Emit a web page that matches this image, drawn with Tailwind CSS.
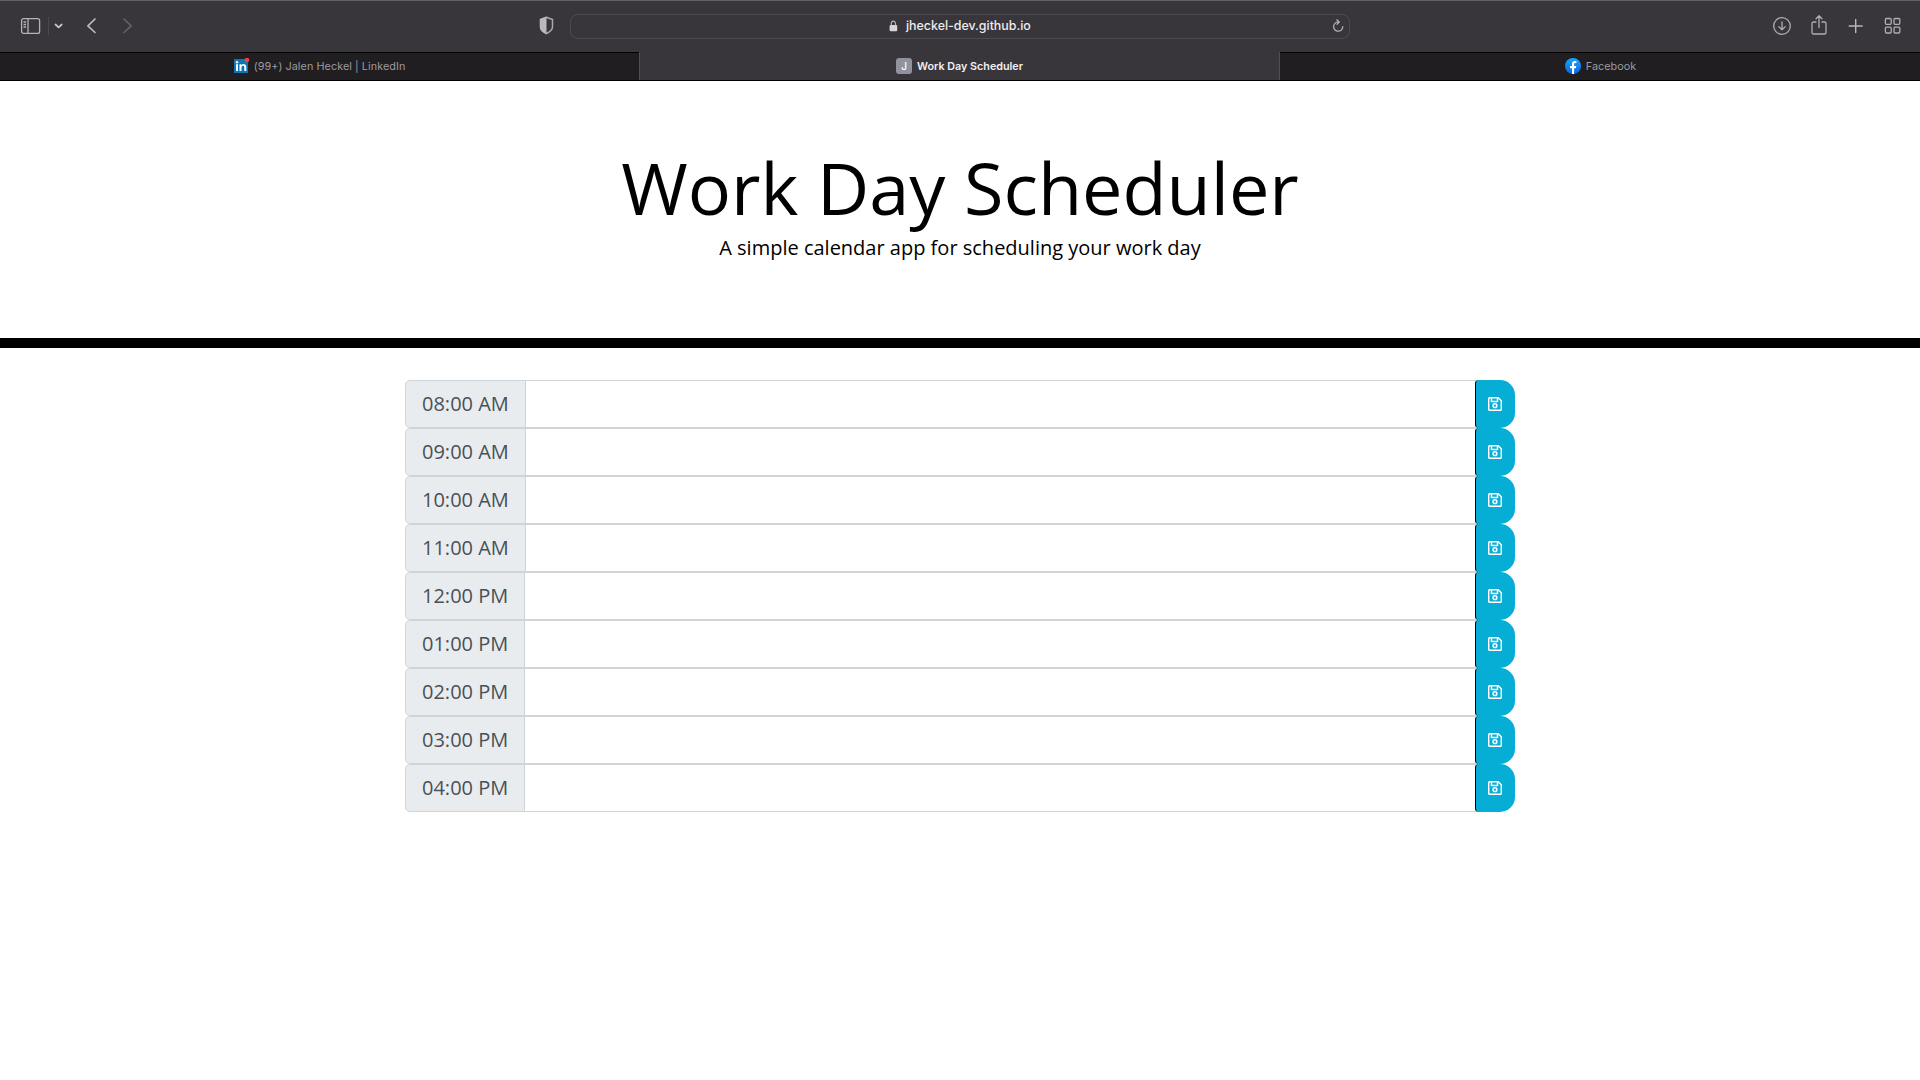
<!DOCTYPE html>
<html lang="en">
<head>
<meta charset="utf-8">
<title>Work Day Scheduler</title>
<script src="https://cdn.jsdelivr.net/npm/@tailwindcss/browser@4"></script>
</head>
<body class="h-screen overflow-hidden bg-white font-['Open_Sans',sans-serif] text-black">
<div class="h-[81px] border-t border-[#626166] bg-[#38363b] font-[Inter,sans-serif]">
  <div class="flex h-[51px] items-center pl-[20px] pr-[18px]">
    <svg class="mb-px h-[18px] w-[22px] shrink-0" viewBox="0 0 22 18" fill="none" stroke="#b5b3b8" stroke-width="1.3"><rect x="1.6" y="1.6" width="18" height="14.8" rx="2"/><path d="M8 1.6v14.8M3.5 5h2.6M3.5 7.5h2.6M3.5 10h2.6"/></svg>
    <div class="mb-px ml-[6px] h-[18px] w-px bg-[#4b494e]"></div>
    <svg class="mb-px ml-[5px] h-[8px] w-[10px]" viewBox="0 0 10 8" fill="none" stroke="#c8c7ca" stroke-width="1.7" stroke-linecap="round" stroke-linejoin="round"><path d="M1.500 2.500 4.600 5.300l3.100-2.800"/></svg>
    <svg class="mb-px ml-[22px] h-[18px] w-[12px]" viewBox="0 0 12 18" fill="none" stroke="#bbb9be" stroke-width="1.700" stroke-linecap="round" stroke-linejoin="round"><path d="M9 2 1.900 8.800 9 15.500"/></svg>
    <svg class="mb-px ml-[24px] h-[18px] w-[12px]" viewBox="0 0 12 18" fill="none" stroke="#636167" stroke-width="1.700" stroke-linecap="round" stroke-linejoin="round"><path d="M2 2l7.200 6.800L2 15.500"/></svg>
    <svg class="mb-px ml-[405px] h-[20px] w-[16px]" viewBox="0 0 16 20"><path d="M8 1.800 14 4v7.500c0 3-3 5-6 6.500-3-1.500-6-3.500-6-6.500V4z" transform="translate(-.5 -.5)" fill="none" stroke="#aaa8ad" stroke-width="1.500"/><path d="M7.500.500.900 3v8c0 3.500 3.100 5.800 6.600 7.400z" fill="#bab8bd"/></svg>
    <div class="ml-[15px] flex h-[25px] w-[780px] items-center rounded-[8px] border border-[#4d4b50] pr-[5px]">
      <svg class="mb-px ml-[318px] h-[12px] w-[9px]" viewBox="0 0 9 12"><rect x=".6" y="5" width="7.600" height="6.300" rx="1" fill="#d6d5d7"/><path d="M2.300 5.500V3.600a2.100 2.400 0 0 1 4.200 0v1.900" fill="none" stroke="#b5b3b8" stroke-width="1.200"/></svg>
      <span class="ml-[8px] w-[127px] whitespace-nowrap text-[12.4px] font-medium leading-none text-[#ededee]">jheckel-dev.github.io</span>
      <svg class="mb-px ml-auto h-[14px] w-[12px]" viewBox="0 0 12 14" fill="none" stroke="#b7b5ba" stroke-width="1.200" stroke-linecap="round" stroke-linejoin="round"><path d="M10.800 7.500A4.600 4.600 0 1 1 6.600 3M4.800.800l2.400 2.200L5 5.300"/></svg>
    </div>
    <svg class="mb-px ml-auto h-[20px] w-[20px]" viewBox="0 0 20 20" fill="none" stroke="#b0aeb3" stroke-width="1.300" stroke-linecap="round" stroke-linejoin="round"><circle cx="10" cy="10" r="8.300"/><path d="M10 5.800v7.700M6.800 10.600l3.200 3.100 3.200-3.100"/></svg>
    <svg class="mb-[3px] ml-[18px] h-[22px] w-[18px]" viewBox="0 0 18 22" fill="none" stroke="#b0aeb3" stroke-width="1.300" stroke-linecap="round" stroke-linejoin="round"><path d="M6 8H3.600A1.600 1.600 0 0 0 2 9.600v8.800A1.600 1.600 0 0 0 3.600 20h10.800a1.600 1.600 0 0 0 1.600-1.600V9.600A1.600 1.600 0 0 0 14.400 8H12M9 13.500V2M6 4.800 9 1.800l3 3"/></svg>
    <svg class="mb-px ml-[20px] h-[16px] w-[16px]" viewBox="0 0 16 16" fill="none" stroke="#b8b6bb" stroke-width="1.400" stroke-linecap="round"><path d="M7.700 1.500v13M1.200 8h13"/></svg>
    <svg class="mb-px ml-[20px] h-[18px] w-[18px]" viewBox="0 0 18 18" fill="none" stroke="#b0aeb3" stroke-width="1.300"><rect x="1.400" y="1.500" width="5.800" height="5.800" rx="1"/><rect x="10" y="1.500" width="5.800" height="5.800" rx="1"/><rect x="1.400" y="10.200" width="5.800" height="5.800" rx="1"/><rect x="10" y="10.200" width="5.800" height="5.800" rx="1"/></svg>
  </div>
  <div class="flex h-[29px] border-b border-black text-[10.800px] leading-none text-[#9d9b9f]">
    <div class="flex w-[639px] items-center justify-center border-t border-black bg-[#201e21]">
      <svg class="mb-[3px] h-[15px] w-[16px]" viewBox="0 0 16 15"><path d="M0 1h14v14H0z" fill="#0a76b5"/><circle cx="3" cy="4.300" r="1.200" fill="#fff"/><path d="M2 6.200h2V13H2zM5.500 6.200h1.900v1c1-1.700 4.900-1.700 4.900 1.800v4h-2V9.500c0-2.300-2.800-2.200-2.800 0V13h-2z" fill="#fff"/><circle cx="13" cy="2" r="2.300" fill="#e8453c"/></svg>
      <span class="ml-[4px] whitespace-nowrap pt-px tracking-[.07px]">(99+) Jalen Heckel | LinkedIn</span>
    </div>
    <div class="flex w-[641px] items-center justify-center border-x border-[#504e53] text-[#f0eff1]">
      <span class="flex size-4 items-center justify-center rounded-[3px] bg-[#9192a0] text-[10px] font-medium text-white">J</span>
      <span class="ml-[5px] whitespace-nowrap pt-[2px] text-[10.750px] font-semibold">Work Day Scheduler</span>
    </div>
    <div class="flex w-[640px] items-center justify-center border-t border-black bg-[#201e21]">
      <svg class="mb-px ml-[1px] size-4" viewBox="0 0 16 16"><defs><linearGradient id="fb" x2="0" y2="1"><stop stop-color="#19a5fb"/><stop offset="1" stop-color="#0668e6"/></linearGradient></defs><circle cx="8" cy="8" r="8" fill="url(#fb)"/><path d="M7 16V10.300H5V8h2V6.300C7 4.200 8.200 3.100 10 3.100l1.400.1v1.900h-1c-1 0-1.300.5-1.300 1.200V8h2.200l-.4 2.300H9.100V16z" fill="#fff"/></svg>
      <span class="ml-[5px] pt-px tracking-[.05px]">Facebook</span>
    </div>
  </div>
</div>
<header class="h-[267px] border-b-[10px] border-black pt-[63px] text-center">
  <h1 class="text-[72px] font-normal leading-[87px]">Work Day Scheduler</h1>
  <p class="pt-[2px] text-[20px] leading-[30px]">A simple calendar app for scheduling your work day</p>
</header>
<main id="rows" class="mx-auto mt-8 w-[1110px]"></main>
<script>
const hours = ['08:00 AM','09:00 AM','10:00 AM','11:00 AM','12:00 PM','01:00 PM','02:00 PM','03:00 PM','04:00 PM'];
document.getElementById('rows').innerHTML = hours.map(h => `
  <div class="flex h-12 text-xl">
    <div class="flex items-center whitespace-nowrap rounded-l-[4.800px] border border-[#ced4da] bg-[#e9ecef] px-4 text-[#495057]">${h}</div>
    <div class="-ml-px flex-1 border border-[#ced4da] bg-white"></div>
    <button class="-ml-px flex w-[40px] items-center justify-center rounded-l-[4px] rounded-r-[15px] border-l border-black bg-[#06aed5] pr-[2px]">
      <svg class="size-[14px]" viewBox="0 0 14 14" fill="none" stroke="#fff" stroke-width="1.500" stroke-linejoin="round"><path d="M1.700.7h8.600l3 3v8.600a1 1 0 0 1-1 1H1.700a1 1 0 0 1-1-1V1.700a1 1 0 0 1 1-1zM3.500 1v3.500h6V1"/><circle cx="7" cy="8.700" r="1.900"/></svg>
    </button>
  </div>`).join('');
</script>
</body>
</html>
